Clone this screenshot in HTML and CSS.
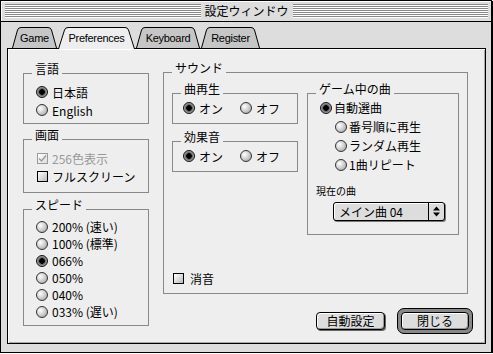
FILE: index.html
```html
<!DOCTYPE html>
<html lang="ja">
<head>
  <meta charset="UTF-8">
  <title>設定ウィンドウ</title>
  <link rel="stylesheet" href="styles.css">
</head>
<body>

<div class="window">
  <div class="titlebar">
    <div class="grip"></div>
    <div class="title">設定ウィンドウ</div>
    <div class="grip"></div>
  </div>

  <div class="frame">
    <div class="tabs">
      <div class="tab tab-game">
        <svg width="45" height="21"><path d="M0.5 21 L5.5 3 Q6.3 0.5 9 0.5 H36 Q38.7 0.5 39.5 3 L44.5 21" /></svg>
        <span>Game</span>
      </div>
      <div class="tab tab-prefs active">
        <svg width="77" height="22"><path d="M0.5 22 L6.5 3 Q7.3 0.5 10 0.5 H67 Q69.7 0.5 70.5 3 L76.5 22" /></svg>
        <span>Preferences</span>
      </div>
      <div class="tab tab-keys">
        <svg width="64" height="21"><path d="M0.5 21 L5.5 3 Q6.3 0.5 9 0.5 H55 Q57.7 0.5 58.5 3 L63.5 21" /></svg>
        <span>Keyboard</span>
      </div>
      <div class="tab tab-reg">
        <svg width="59" height="21"><path d="M0.5 21 L5.5 3 Q6.3 0.5 9 0.5 H50 Q52.7 0.5 53.5 3 L58.5 21" /></svg>
        <span>Register</span>
      </div>
    </div>

    <div class="panel">
      <div class="col-left">
        <div class="group lang">
          <div class="group-title">言語</div>
          <div class="group-body">
            <div class="row"><span class="radio on"></span>日本語</div>
            <div class="row"><span class="radio"></span>English</div>
          </div>
        </div>

        <div class="group screen">
          <div class="group-title">画面</div>
          <div class="group-body">
            <div class="row disabled">
              <span class="check checked">
                <svg width="9" height="9"><path d="M1 4.5 L3.5 7 L8 1.5" /></svg>
              </span>256色表示
            </div>
            <div class="row"><span class="check"></span>フルスクリーン</div>
          </div>
        </div>

        <div class="group speed">
          <div class="group-title">スピード</div>
          <div class="group-body">
            <div class="row"><span class="radio"></span>200% (速い)</div>
            <div class="row"><span class="radio"></span>100% (標準)</div>
            <div class="row"><span class="radio on"></span>066%</div>
            <div class="row"><span class="radio"></span>050%</div>
            <div class="row"><span class="radio"></span>040%</div>
            <div class="row"><span class="radio"></span>033% (遅い)</div>
          </div>
        </div>
      </div>

      <div class="col-right">
        <div class="group sound">
          <div class="group-title">サウンド</div>
          <div class="sound-inner">
            <div class="sound-left">
              <div class="group small">
                <div class="group-title">曲再生</div>
                <div class="group-body">
                  <div class="row opt"><span class="radio on"></span>オン</div>
                  <div class="row opt"><span class="radio"></span>オフ</div>
                </div>
              </div>
              <div class="group small">
                <div class="group-title">効果音</div>
                <div class="group-body">
                  <div class="row opt"><span class="radio on"></span>オン</div>
                  <div class="row opt"><span class="radio"></span>オフ</div>
                </div>
              </div>
            </div>

            <div class="group music">
              <div class="group-title">ゲーム中の曲</div>
              <div class="group-body">
                <div class="row main"><span class="radio on"></span>自動選曲</div>
                <div class="row sub"><span class="radio"></span>番号順に再生</div>
                <div class="row sub"><span class="radio"></span>ランダム再生</div>
                <div class="row sub"><span class="radio"></span>1曲リピート</div>
                <div class="cur-label">現在の曲</div>
                <div class="popup">
                  <span class="popup-text">メイン曲 04</span>
                  <span class="popup-arrow">
                    <svg width="7" height="11"><path d="M3.5 0.5 L7 4.5 H0 Z M0 6.5 H7 L3.5 10.5 Z" /></svg>
                  </span>
                </div>
              </div>
            </div>
          </div>

          <div class="row mute"><span class="check"></span>消音</div>
        </div>

        <div class="buttons">
          <div class="btn btn-auto">自動設定</div>
          <div class="default-ring">
            <div class="btn btn-close">閉じる</div>
          </div>
        </div>
      </div>
    </div>
  </div>
</div>

</body>
</html>
```

FILE: styles.css
```css
* {
  box-sizing: border-box;
}

body {
  margin: 0;
  background: #fff;
  color: #000;
  font-family: "Noto Sans CJK JP", sans-serif;
  font-size: 12px;
}

.window {
  width: 492px;
  height: 353px;
  border: 1px solid #000;
  box-shadow: 1px 1px 0 #000;
  background: #ddd;
}

/* Title bar */
.titlebar {
  display: flex;
  align-items: center;
  gap: 4px;
  height: 21px;
  padding: 0 3px 0 4px;
  border-bottom: 1px solid #000;
  background: #ddd;
  box-shadow: inset 1px 1px 0 #fff;
}

.grip {
  flex: 1;
  height: 14px;
  background: repeating-linear-gradient(to bottom, #888 0 1px, #fff 1px 2px);
}

.title {
  line-height: 14px;
}

/* Tabs */
.frame {
  padding: 5px 5px 0 6px;
}

.tabs {
  display: flex;
  gap: 1px;
  height: 21px;
  margin-left: 5px;
  position: relative;
  z-index: 1;
}

.tab {
  position: relative;
  height: 21px;
  display: flex;
  align-items: center;
  justify-content: center;
  font-family: "Liberation Sans", sans-serif;
  font-size: 11px;
  letter-spacing: -0.3px;
  padding-top: 1px;
}

.tab svg {
  position: absolute;
  left: 0;
  top: 0;
}

.tab path {
  fill: #c6c6c6;
  stroke: #000;
  stroke-width: 1;
}

.tab.active path {
  fill: #eee;
}

.tab span {
  position: relative;
}

.tab-game { width: 45px; }
.tab-prefs { width: 77px; }
.tab-keys { width: 64px; }
.tab-reg { width: 59px; }

/* Panel */
.panel {
  height: 296px;
  border: 1px solid #000;
  background: #eee;
  box-shadow: inset 1px 1px 0 #fff, inset -1px -1px 0 #aaa;
  display: grid;
  grid-template-columns: 126px 305px;
  column-gap: 14px;
  align-items: start;
  padding: 23px 17px 0 15px;
}

.col-left {
  padding-top: 1px;
}

.group {
  border: 1px solid #888;
}

.group-title {
  width: fit-content;
  height: 14px;
  margin: -12px 0 0 8px;
  padding: 0 3px;
  background: #eee;
  line-height: 14px;
}

.row {
  display: flex;
  align-items: center;
  gap: 4px;
  height: 18px;
  white-space: nowrap;
}

.row.disabled {
  color: #999;
}

/* Controls */
.radio {
  flex: none;
  width: 12px;
  height: 12px;
  border: 1px solid #333;
  border-radius: 50%;
  background: radial-gradient(circle at 35% 35%, #fff 0, #ddd 35%, #999 100%);
}

.radio.on {
  border-color: #111;
  background: radial-gradient(circle at 50% 50%, #000 0 2.5px, #555 3px, #999 4.5px, #bbb 100%);
}

.check {
  flex: none;
  width: 11px;
  height: 11px;
  border: 1px solid #000;
  background: linear-gradient(135deg, #fff, #bbb);
  display: flex;
  align-items: center;
  justify-content: center;
}

.check.checked {
  border-color: #999;
  background: linear-gradient(135deg, #fff, #ddd);
}

.check svg path {
  fill: none;
  stroke: #999;
  stroke-width: 1.4;
}

/* Left column groups */
.lang .group-body {
  padding: 7px 0 4px 12px;
}

.screen {
  margin-top: 15px;
}

.screen .group-body {
  padding: 7px 0 7px 13px;
}

.speed {
  margin-top: 16px;
}

.speed .group-body {
  padding: 6px 0 5px 12px;
}

.speed .row {
  height: 17px;
}

/* Sound */
.sound {
  height: 222px;
  display: flex;
  flex-direction: column;
}

.sound-inner {
  display: grid;
  grid-template-columns: 126px 152px;
  column-gap: 9px;
  align-items: start;
  margin-top: 18px;
  padding: 0 8px;
}

.small .group-body {
  display: flex;
  padding: 3px 0 6px 10px;
}

.small + .small {
  margin-top: 17px;
}

.opt {
  width: 57px;
}

.music .group-body {
  padding: 2px 0 13px 8px;
}

.music .row {
  height: 19px;
  gap: 2px;
}

.music .main {
  margin-left: 4px;
}

.music .sub {
  margin-left: 19px;
}

.cur-label {
  margin-top: 10px;
  font-size: 10px;
  line-height: 14px;
}

.popup {
  display: flex;
  width: 112px;
  height: 19px;
  margin: 4px 0 0 17px;
  border: 1px solid #000;
  border-radius: 3px;
  background: #ddd;
  box-shadow: 1px 1px 0 #777, inset 1px 1px 0 #fff;
}

.popup-text {
  flex: 1;
  padding-left: 5px;
  line-height: 17px;
}

.popup-arrow {
  width: 16px;
  border-left: 1px solid #000;
  display: flex;
  align-items: center;
  justify-content: center;
}

.popup-arrow path {
  fill: #000;
}

.mute {
  margin-top: auto;
  margin-bottom: 6px;
  padding-left: 9px;
  gap: 6px;
}

/* Buttons */
.buttons {
  display: flex;
  justify-content: flex-end;
  align-items: center;
  gap: 12px;
  margin: 14px -5px 0 0;
}

.btn {
  height: 18px;
  border: 1px solid #000;
  border-radius: 4px;
  background: #ddd;
  box-shadow: inset 1px 1px 0 #fff, inset -1px -1px 0 #999;
  text-align: center;
  line-height: 16px;
}

.btn-auto {
  width: 69px;
  box-shadow: inset 1px 1px 0 #fff, inset -1px -1px 0 #999, 1px 1px 0 #666;
}

.btn-close {
  width: 68px;
}

.default-ring {
  padding: 3px;
  border: 1px solid #000;
  border-radius: 7px;
  background: #888;
}
```
